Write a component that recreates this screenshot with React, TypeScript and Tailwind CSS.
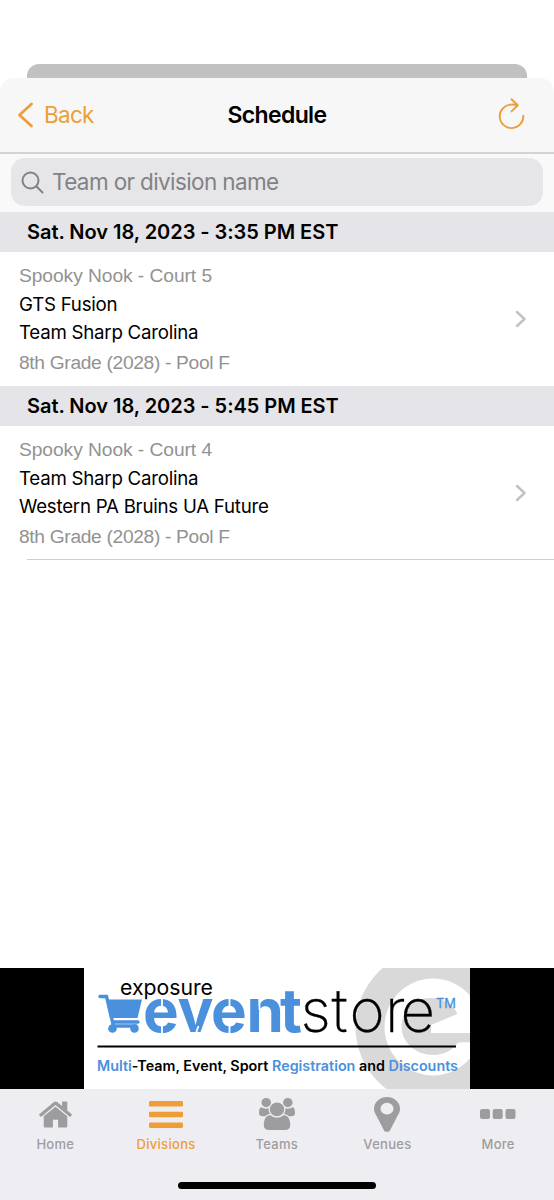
import React from "react";

const games = [
  {
    time: "Sat. Nov 18, 2023 - 3:35 PM EST",
    venue: "Spooky Nook - Court 5",
    home: "GTS Fusion",
    away: "Team Sharp Carolina",
    division: "8th Grade (2028) - Pool F",
  },
  {
    time: "Sat. Nov 18, 2023 - 5:45 PM EST",
    venue: "Spooky Nook - Court 4",
    home: "Team Sharp Carolina",
    away: "Western PA Bruins UA Future",
    division: "8th Grade (2028) - Pool F",
  },
];

function Header() {
  return (
    <header className="grid h-[76px] grid-cols-[1fr_auto_1fr] items-center rounded-t-[14px] border-b-2 border-[#d3d3d4] bg-[#f7f7f7]">
      <button className="flex items-center gap-[10px] pl-[17px] text-[#eb9f3a]">
        <svg width="17" height="26" viewBox="0 0 17 26" fill="none" stroke="currentColor" strokeWidth="2.8" strokeLinecap="round" strokeLinejoin="round">
          <path d="M14.500 2L2.500 13L14.500 24" />
        </svg>
        <span className="text-[22.5px] leading-[30px] tracking-[-0.7px]">Back</span>
      </button>
      <h1 className="text-[23px] font-semibold leading-[30px] tracking-[-0.65px] text-black">Schedule</h1>
      <svg className="mr-[28px] justify-self-end text-[#eb9f3a]" width="28" height="34" viewBox="0 0 28 34" fill="none" stroke="currentColor" strokeWidth="1.9" strokeLinecap="round" strokeLinejoin="round">
        <path d="M25.300 17.600A11.800 11.800 0 1 1 13.500 6.500Q16.500 6.300 19 7.200" />
        <path d="M13.500 1.200L19.800 7.300L13.500 13.400" />
      </svg>
    </header>
  );
}

function SearchBar() {
  return (
    <div className="h-[58px] bg-[#f9f9fa] px-[11px] pt-1">
      <div className="flex h-12 items-center gap-[8px] rounded-[14px] bg-[#e6e6e8] pl-[10px] text-[#828286]">
        <svg width="23" height="23" viewBox="0 0 23 23" fill="none" stroke="currentColor" strokeWidth="2" strokeLinecap="round">
          <circle cx="9.500" cy="9.500" r="8" />
          <path d="M15.500 15.500L21.500 21.500" />
        </svg>
        <span className="text-[22.5px] leading-[30px] tracking-[-0.62px]">Team or division name</span>
      </div>
    </div>
  );
}

function Game({ game }: { game: (typeof games)[number] }) {
  return (
    <section>
      <h2 className="flex h-10 items-center bg-[#e5e4e9] pl-[27px] text-[20px] font-semibold tracking-[-0.04px] text-black">{game.time}</h2>
      <div className="flex h-[134px] items-center justify-between pl-[19px] pr-[27px]">
        <div className="whitespace-nowrap text-[18.7px] tracking-[-0.25px] text-black">
          <p className="h-[30px] font-['Liberation_Sans',sans-serif] text-[19.2px] leading-[29px] tracking-[-0.05px] text-[#929292]">{game.venue}</p>
          <p className="h-7 leading-7">{game.home}</p>
          <p className="h-7 leading-[27px]">{game.away}</p>
          <p className="h-[30px] font-['Liberation_Sans',sans-serif] text-[19.2px] leading-[31px] tracking-[-0.32px] text-[#929292]">{game.division}</p>
        </div>
        <svg width="12" height="18" viewBox="0 0 12 18" fill="none" stroke="#c2c2c5" strokeWidth="2.500" strokeLinecap="round" strokeLinejoin="round">
          <path d="M2 2L9.500 9L2 16" />
        </svg>
      </div>
    </section>
  );
}

function Banner() {
  return (
    <div className="flex h-[121px] justify-center bg-black">
      <svg className="bg-white" width="386" height="121" viewBox="84 968 386 121" fontFamily="Inter, sans-serif">
        <circle cx="433" cy="1027" r="77.500" fill="#d9d9d9" />
        <circle cx="433" cy="1027" r="48.500" fill="#fff" />
        <path d="M401.500 1027C402 1009 415 998 431 998C443 998 453 1004 457.500 1014L431 1025V1033H470V1042.500H458C453 1050 444 1055 434 1055C416 1055 402 1043 401.500 1027Z" fill="#d9d9d9" />
        <path d="M462 1042.500H470V1053H462z" fill="#fff" />
        <text x="120" y="994.600" fontSize="21.500" textLength="93" lengthAdjust="spacingAndGlyphs">exposure</text>
        <g fill="#4a90dd" stroke="#4a90dd">
          <path d="M106 999.500H142L137.500 1018H110z" stroke="none" />
          <path d="M100 996.500H106.500L113.500 1026H136M113 1022H138" fill="none" strokeWidth="3.400" strokeLinecap="round" />
          <path d="M114 1019H140" stroke="#fff" strokeWidth="1.300" />
          <circle cx="112.500" cy="1028.500" r="4.300" stroke="none" />
          <circle cx="134.500" cy="1028.500" r="4.300" stroke="none" />
        </g>
        <text x="143 177.500 211 246.500 280" y="1032" fontSize="60" fontWeight="700" fill="#4a90dd">event</text>
        <g stroke="#fff" strokeWidth="1.800">
          <path d="M162 997V1008M162 1024V1035" />
          <path d="M229.500 997V1008M229.500 1024V1035" />
          <path d="M196 1033L198.500 1026" />
          <path d="M259.500 998V1010" />
        </g>
        <text x="300.500 331.500 349.500 385 400.500" y="1032" fontSize="60" fontWeight="200" stroke="#000" strokeWidth="0.300">store</text>
        <text x="436" y="1008" fontSize="13.500" fill="#4a90dd" stroke="#4a90dd" strokeWidth="0.300" textLength="20" lengthAdjust="spacingAndGlyphs">TM</text>
        <path d="M97.500 1046.500H456" stroke="#000" strokeWidth="2" />
        <text x="97" y="1071" fontSize="14" fontWeight="600" textLength="361" lengthAdjust="spacingAndGlyphs">
          <tspan fill="#4a90dd">Multi</tspan>-Team, Event, Sport <tspan fill="#4a90dd">Registration</tspan> and <tspan fill="#4a90dd">Discounts</tspan>
        </text>
      </svg>
    </div>
  );
}

const tabs = [
  {
    label: "Home",
    icon: (
      <svg width="33" height="27" viewBox="89 253 1614 1283" fill="currentColor">
        <path d="M1472 992v480q0 26-19 45t-45 19h-384v-384h-256v384h-384q-26 0-45-19t-19-45v-480q0-1 .5-3t.5-3l575-474 575 474q1 2 1 6zm223-69l-62 74q-8 9-21 11h-3q-13 0-21-7l-692-577-692 577q-12 8-24 7-13-2-21-11l-62-74q-8-10-7-23.500t11-21.500l719-599q32-26 76-26t76 26l244 204v-195q0-14 9-23t23-9h192q14 0 23 9t9 23v408l219 182q10 8 11 21.500t-7 23.500z" />
      </svg>
    ),
  },
  {
    label: "Divisions",
    icon: (
      <svg width="34" height="27" viewBox="0 0 34 27" fill="currentColor">
        <rect width="34" height="5.500" rx="1.300" />
        <rect y="10.700" width="34" height="5.500" rx="1.300" />
        <rect y="21.400" width="34" height="5.500" rx="1.300" />
      </svg>
    ),
  },
  {
    label: "Teams",
    icon: (
      <svg width="36" height="32" viewBox="-64 0 1920 1792" preserveAspectRatio="none" fill="currentColor">
        <path d="M529 896q-162 5-265 128h-134q-82 0-138-40.500t-56-118.500q0-353 124-353 6 0 43.500 21t97.500 42.500 119 21.500q67 0 133-23-5 37-5 66 0 139 81 256zm1071 637q0 120-73 189.500t-194 69.500h-874q-121 0-194-69.500t-73-189.500q0-53 3.500-103.500t14-109 26.500-108.500 43-97.500 62-81 85.500-53.500 111.500-20q10 0 43 21.500t73 48 107 48 135 21.500 135-21.500 107-48 73-48 43-21.500q61 0 111.500 20t85.500 53.500 62 81 43 97.500 26.500 108.500 14 109 3.500 103.500zm-1024-1277q0 106-75 181t-181 75-181-75-75-181 75-181 181-75 181 75 75 181zm704 384q0 159-112.500 271.500t-271.500 112.500-271.500-112.500-112.500-271.500 112.500-271.500 271.500-112.500 271.500 112.500 112.500 271.500zm576 225q0 78-56 118.500t-138 40.500h-134q-103-123-265-128 81-117 81-256 0-29-5-66 66 23 133 23 59 0 119-21.500t97.500-42.500 43.500-21q124 0 124 353zm-128-609q0 106-75 181t-181 75-181-75-75-181 75-181 181-75 181 75 75 181z" />
      </svg>
    ),
  },
  {
    label: "Venues",
    icon: (
      <svg width="26" height="35" viewBox="384 128 1024 1536" preserveAspectRatio="none" fill="currentColor">
        <path d="M1152 640q0-106-75-181t-181-75-181 75-75 181 75 181 181 75 181-75 75-181zm256 0q0 109-33 179l-364 774q-16 33-47.500 52t-67.500 19-67.500-19-46.500-52l-365-774q-33-70-33-179 0-212 150-362t362-150 362 150 150 362z" />
      </svg>
    ),
  },
  {
    label: "More",
    icon: (
      <svg width="36" height="10" viewBox="0 0 36 10" fill="currentColor">
        <rect width="10" height="10" rx="2" />
        <rect x="12.700" width="10" height="10" rx="2" />
        <rect x="25.500" width="10" height="10" rx="2" />
      </svg>
    ),
  },
];

function TabBar() {
  return (
    <footer className="flex h-[111px] flex-col items-center bg-[#eeedf2]">
      <nav className="grid w-full grid-cols-5 pr-[0.5px]">
        {tabs.map((tab) => (
          <div key={tab.label} className={tab.label === "Divisions" ? "flex flex-col items-center text-[#ee9d37]" : "flex flex-col items-center text-[#9d9d9f]"}>
            <div className="flex h-[50px] items-center">{tab.icon}</div>
            <span className="-mt-[3px] text-[13px] font-medium leading-4 tracking-[0.3px]">{tab.label}</span>
          </div>
        ))}
      </nav>
      <div className="mt-auto mb-[11px] h-[7px] w-[198px] rounded-full bg-black" />
    </footer>
  );
}

export default function App() {
  return (
    <div className="flex h-[1200px] w-[554px] flex-col overflow-hidden bg-white font-['Inter',sans-serif]">
      <div className="mx-[27px] mt-16 h-[14px] rounded-t-[12px] bg-[#c1c1c1]" />
      <Header />
      <SearchBar />
      <main className="flex-1">
        {games.map((game) => (
          <Game key={game.time} game={game} />
        ))}
        <div className="-mt-px ml-[27px] h-px bg-[#cececf]" />
      </main>
      <Banner />
      <TabBar />
    </div>
  );
}
